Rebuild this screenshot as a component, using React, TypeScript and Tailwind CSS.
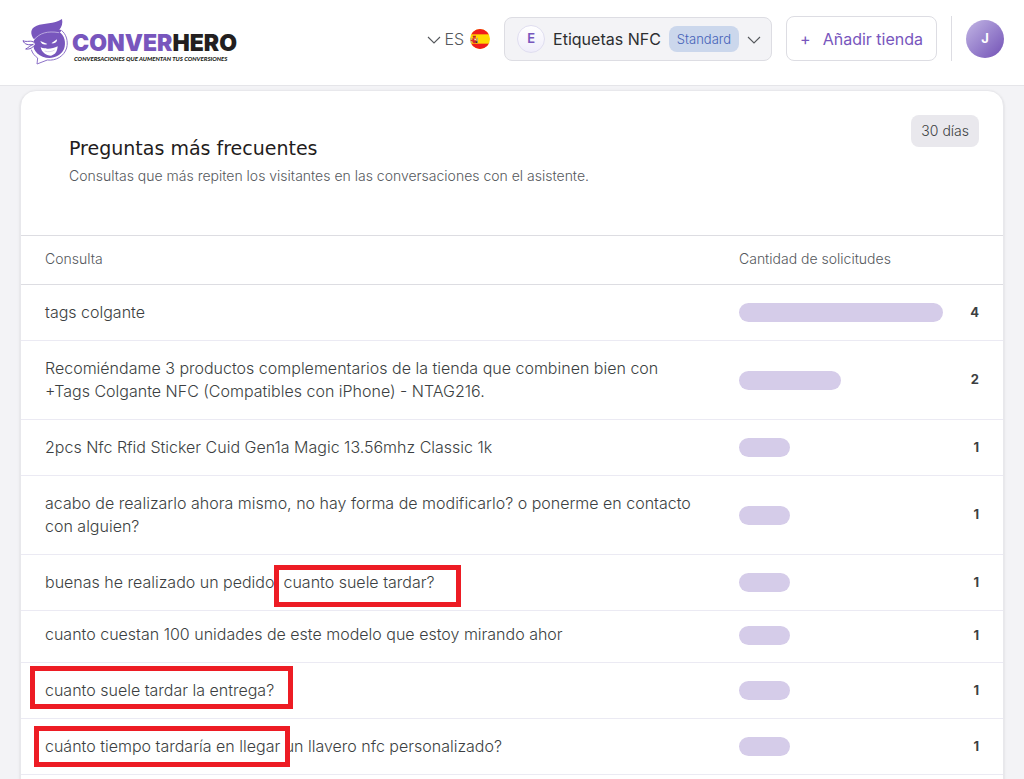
import React from 'react';

type Box = { className: string };

type Query = {
  text: string;
  count: number;
  compact?: boolean;
  box?: Box;
};

const queries: Query[] = [
  { text: 'tags colgante', count: 4 },
  {
    text: 'Recomiéndame 3 productos complementarios de la tienda que combinen bien con +Tags Colgante NFC (Compatibles con iPhone) - NTAG216.',
    count: 2,
  },
  { text: '2pcs Nfc Rfid Sticker Cuid Gen1a Magic 13.56mhz Classic 1k', count: 1 },
  {
    text: 'acabo de realizarlo ahora mismo, no hay forma de modificarlo? o ponerme en contacto con alguien?',
    count: 1,
  },
  {
    text: 'buenas he realizado un pedido, cuanto suele tardar?',
    count: 1,
    box: { className: 'left-[253px] top-[10px] w-[187px] h-[42px]' },
  },
  { text: 'cuanto cuestan 100 unidades de este modelo que estoy mirando ahor', count: 1, compact: true },
  {
    text: 'cuanto suele tardar la entrega?',
    count: 1,
    box: { className: 'left-[9px] top-[3px] w-[263px] h-[43px]' },
  },
  {
    text: 'cuánto tiempo tardaría en llegar un llavero nfc personalizado?',
    count: 1,
    box: { className: 'left-[13px] top-[7px] w-[256px] h-[41px]' },
  },
];

const maxCount = Math.max(...queries.map((q) => q.count));

const App: React.FC = () => {
  return (
    <div className="h-screen overflow-hidden bg-[#f3f3f6] font-['Inter',sans-serif] text-[#3c3f42]">
      <Header />
      <main className="px-5 pt-1">
        <section className="rounded-[16px] border border-[#e8e8ec] bg-white pb-14 shadow-sm">
          <div className="flex h-36 items-start justify-between pl-12 pr-6">
            <div className="pt-[45px]">
              <h2 className="font-['DejaVu_Sans',sans-serif] text-[19px] leading-6 text-[#1f1c20]">
                Preguntas más frecuentes
              </h2>
              <p className="mt-1 text-[14px] font-light leading-6 text-[#55585c]">
                Consultas que más repiten los visitantes en las conversaciones con el asistente.
              </p>
            </div>
            <button className="mt-6 h-8 rounded-lg bg-[#e9e8ed] px-[10px] pb-[2px] text-[14px] font-light text-[#3c3f42]">
              30 días
            </button>
          </div>

          <table className="w-full table-fixed border-collapse text-left">
            <thead>
              <tr className="h-[49px] border-y border-[#dddde2] text-[14px] text-[#55585c]">
                <th className="px-6 pb-1 font-light">Consulta</th>
                <th className="w-[288px] px-6 pb-1 font-light">Cantidad de solicitudes</th>
              </tr>
            </thead>
            <tbody>
              {queries.map((q) => (
                <QueryRow key={q.text} query={q} />
              ))}
            </tbody>
          </table>
        </section>
      </main>
    </div>
  );
};

/* ================= TABLE ROW ================= */

const QueryRow = ({ query }: { query: Query }) => (
  <tr className="border-b border-[#ebeaf3]">
    <td
      className={`relative pl-6 pr-4 text-[16px] font-light leading-[23px] ${
        query.compact ? 'pb-4 pt-3' : 'py-4'
      }`}
    >
      {query.text}
      {query.box && (
        <span className={`absolute border-[5px] border-[#ed1c24] ${query.box.className}`} />
      )}
    </td>
    <td className={`px-6 ${query.compact ? 'pb-[2px]' : ''}`}>
      <div className="flex items-center justify-between">
        <div className="w-[204px]">
          <div
            className="h-[19px] rounded-full bg-[#d5cce9]"
            style={{ width: `${(query.count / maxCount) * 100}%` }}
          />
        </div>
        <span className="pb-[2px] text-[13px] font-bold leading-5">{query.count}</span>
      </div>
    </td>
  </tr>
);

/* ================= HEADER ================= */

const Header = () => (
  <header className="flex items-start justify-between border-b border-[#e5e5e9] bg-white pb-5 pl-[22px] pr-5 pt-4">
    <a href="#" aria-label="Converhero" className="flex items-center">
      <HeroMark />
      <span className="ml-[2px] flex flex-col pt-3">
        <span className="text-[23px] font-black leading-6 text-[#231f20]">
          <span className="text-[#7856bd]">CONVER</span>HERO
        </span>
        <span className="ml-[2px] whitespace-nowrap font-['Lato',sans-serif] text-[6px] font-black italic leading-2 text-[#231f20]">
          CONVERSACIONES QUE AUMENTAN TUS CONVERSIONES
        </span>
      </span>
    </a>

    <div className="flex items-center gap-[14px]">
      <button className="flex items-center text-[16px] font-light text-[#55585c]">
        <Chevron />
        <span className="ml-[3px] mr-[6px]">ES</span>
        <SpainFlag />
      </button>

      <button className="flex h-11 items-center gap-2 rounded-lg border border-[#dddde3] bg-[#f3f3f6] pl-3 pr-[10px]">
        <span className="flex size-7 items-center justify-center rounded-full border border-[#e0def0] bg-gradient-to-b from-white to-[#efedfa] text-[13px] font-semibold text-[#7856bd]">
          E
        </span>
        <span className="text-[16px] text-[#2c2e30]">Etiquetas NFC</span>
        <span className="rounded-lg bg-[#cbd7ec] px-2 py-[3px] text-[13px] font-light leading-5 text-[#4562b8]">
          Standard
        </span>
        <Chevron />
      </button>

      <button className="flex h-[45px] items-center gap-3 rounded-lg border border-[#dddde3] bg-white px-[13px] text-[16px] text-[#7856bd]">
        <span>+</span>
        Añadir tienda
      </button>

      <span className="h-[45px] w-px bg-[#dddde3]" />

      <button className="flex size-[38px] items-center justify-center rounded-full bg-gradient-to-br from-[#c3b6e4] to-[#7350b5] text-[13px] font-bold text-white">
        J
      </button>
    </div>
  </header>
);

/* ================= ICONS ================= */

const Chevron = () => (
  <svg width="14" height="14" viewBox="0 0 14 14" fill="none" stroke="#55585c" strokeWidth="1.1">
    <path d="M1 5l6 6 6-6" />
  </svg>
);

const SpainFlag = () => (
  <svg width="20" height="20" viewBox="0 0 60 60">
    <clipPath id="flag">
      <circle cx="30" cy="30" r="30" />
    </clipPath>
    <g clipPath="url(#flag)">
      <rect width="60" height="60" fill="#ffda00" />
      <rect width="60" height="16" fill="#f01c1c" />
      <rect y="44" width="60" height="16" fill="#f01c1c" />
      <path d="M1 26h4v16H1zM21 26h3v16h-3z" fill="#b9a08a" />
      <path d="M7 28h12v11q-6 8-12 0z" fill="#d8262c" />
      <path d="M8 20h10l-1 6H9z" fill="#c4232a" />
      <path d="M13 29h5v5h-5z" fill="#f2d7d0" />
      <path d="M17 37h5v5h-5z" fill="#3a3430" />
      <path d="M2 33h6v3H2z" fill="#d8262c" />
    </g>
  </svg>
);

const HeroMark = () => (
  <svg width="48" height="49" viewBox="6 0 144 147" fill="none">
    {/* speech bubble outline */}
    <path
      d="M124 43C139 54 145 76 140 96C132 121 108 135 82 132L51 144L53 126C43 119 37 111 34 101"
      stroke="#8d72c8"
      strokeWidth="3"
    />
    {/* face */}
    <path
      d="M45 67C59 47 87 42 117 47C134 57 139 80 132 99C122 122 93 132 68 122C43 113 32 88 45 67Z"
      fill="#7856bd"
    />
    {/* hair */}
    <path
      d="M42 70C31 55 29 37 50 29C72 21 101 25 126 9C129 22 125 33 118 41C126 40 124 47 117 50C90 43 62 49 42 70Z"
      fill="#7856bd"
    />
    <path d="M42 72C58 51 83 44 117 50" stroke="#d9d0ee" strokeWidth="2" />
    {/* bandana knot */}
    <path
      d="M43 80C34 71 21 80 9 74C13 86 27 88 40 85C30 89 25 95 17 99C30 101 39 94 45 86"
      fill="#fff"
      stroke="#7856bd"
      strokeWidth="3"
    />
    {/* eyes */}
    <path d="M61 75L82 84C74 88 64 85 61 75ZM94 82L111 70C112 79 104 84 94 82Z" fill="#fff" />
    {/* smile */}
    <path d="M62 94C70 98 77 96 81 98C91 99 103 96 113 91C112 105 107 116 93 119C78 119 65 109 62 94Z" fill="#fff" />
    <path d="M74 105C85 109 96 107 104 102" stroke="#c9bce5" strokeWidth="2" />
  </svg>
);

export default App;
